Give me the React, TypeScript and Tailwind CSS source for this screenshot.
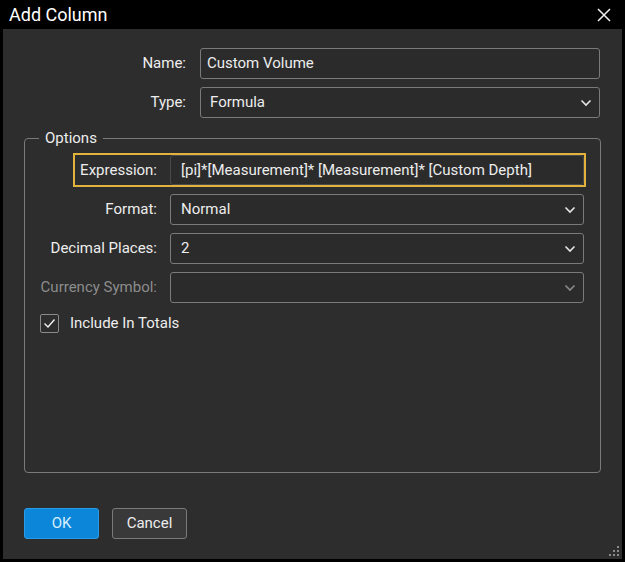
import React from 'react'

const font = { fontFamily: 'Roboto, "Noto Sans", Arial, sans-serif' }

function Chevron({ dim }: { dim?: boolean }) {
  return (
    <svg width="12" height="8" viewBox="0 0 12 8" className={dim ? 'text-[#8a8a8a]' : 'text-[#e6e6e6]'}>
      <path d="M1.5 1.5 L6 6 L10.5 1.5" fill="none" stroke="currentColor" strokeWidth="1.6" />
    </svg>
  )
}

function SelectBox({ value, dim, pad = 'pl-[10px]' }: { value: string; dim?: boolean; pad?: string }) {
  return (
    <div className={`flex h-[31px] w-full items-center justify-between rounded-[3px] border border-[#7a7a7a] bg-[#2b2b2b] ${pad} pr-[7px]`}>
      <span className="text-[15px] text-[#ededed]">{value}</span>
      <Chevron dim={dim} />
    </div>
  )
}

function Row({ label, children, disabled }: { label: string; children: React.ReactNode; disabled?: boolean }) {
  return (
    <div className="flex items-center">
      <span className={`w-[145px] pr-[13px] text-right text-[15px] ${disabled ? 'text-[#8c8c8c]' : 'text-[#ededed]'}`}>
        {label}
      </span>
      <div className="w-[414px]">{children}</div>
    </div>
  )
}

export default function App() {
  return (
    <div style={font} className="flex h-[562px] w-[625px] flex-col bg-black px-[3px] pb-[3px]">
      {/* title bar */}
      <div className="-mx-[3px] flex h-[29px] items-center justify-between bg-black pl-[9px] pr-[14px]">
        <span className="text-[18px] text-white">Add Column</span>
        <svg width="14" height="14" viewBox="0 0 14 14">
          <path d="M1 1 L13 13 M13 1 L1 13" stroke="#f0f0f0" strokeWidth="1.5" />
        </svg>
      </div>

      <div className="relative flex flex-1 flex-col bg-[#2d2d2d]">
        <div className="mt-[19px] flex flex-col gap-[8px]">
          <div className="flex items-center">
            <span className="w-[183px] text-right text-[15px] text-[#ededed]">Name:</span>
            <div className="ml-[14px] flex h-[31px] w-[400px] items-center rounded-[3px] border border-[#7a7a7a] bg-[#2b2b2b] pl-[6px]">
              <span className="text-[15px] text-[#ededed]">Custom Volume</span>
            </div>
          </div>
          <div className="flex items-center">
            <span className="w-[183px] text-right text-[15px] text-[#ededed]">Type:</span>
            <div className="ml-[14px] w-[400px]">
              <SelectBox value="Formula" pad="pl-[9px]" />
            </div>
          </div>
        </div>

        <fieldset className="mt-[11px] ml-[21px] w-[577px] rounded-[4px] border border-[#7a7a7a] pb-[137px]">
          <legend className="ml-[14px] px-[6px] text-[15px] leading-[18px] text-[#ededed]">Options</legend>

          <div className="mt-[6px] ml-[48px] flex w-[513px] items-center border-2 border-[#e3b23c]">
            <span className="flex-1 pr-[13px] text-right text-[15px] text-[#ededed]">Expression:</span>
            <div className="flex h-[30px] w-[414px] items-center rounded-[3px] border border-[#4a4a4a] bg-[#2b2b2b] pl-[10px]">
              <span className="text-[15px] text-[#ededed]">[pi]*[Measurement]* [Measurement]* [Custom Depth]</span>
            </div>
          </div>

          <div className="mt-[7px] flex flex-col gap-[8px]">
            <Row label="Format:">
              <SelectBox value="Normal" />
            </Row>
            <Row label="Decimal Places:">
              <SelectBox value="2" />
            </Row>
            <Row label="Currency Symbol:" disabled>
              <SelectBox value="" dim />
            </Row>
          </div>

          <div className="mt-[9px] ml-[15px] flex items-center gap-[11px]">
            <div className="flex h-[19px] w-[19px] items-center justify-center rounded-[2px] border border-[#8a8a8a]">
              <svg width="13" height="11" viewBox="0 0 13 11">
                <path d="M1.5 5.5 L5 9 L11.5 1.5" fill="none" stroke="#f2f2f2" strokeWidth="1.4" />
              </svg>
            </div>
            <span className="text-[15px] text-[#ededed]">Include In Totals</span>
          </div>
        </fieldset>

        <div className="mt-[35px] ml-[21px] flex gap-[13px]">
          <button className="flex h-[31px] w-[75px] items-center justify-center rounded-[3px] border border-[#2a9be8] bg-[#0c86d8] text-[15px] text-[#d6f0ff]">
            OK
          </button>
          <button className="flex h-[31px] w-[75px] items-center justify-center rounded-[3px] border border-[#7a7a7a] bg-[#393939] text-[15px] text-[#ededed]">
            Cancel
          </button>
        </div>

        {/* resize grip */}
        <svg width="12" height="12" viewBox="0 0 12 12" className="absolute right-[2px] bottom-[2px]">
          <g fill="#8a8a8a">
            <rect x="9" y="1" width="2" height="2" />
            <rect x="5" y="5" width="2" height="2" />
            <rect x="9" y="5" width="2" height="2" />
            <rect x="1" y="9" width="2" height="2" />
            <rect x="5" y="9" width="2" height="2" />
            <rect x="9" y="9" width="2" height="2" />
          </g>
        </svg>
      </div>
    </div>
  )
}
